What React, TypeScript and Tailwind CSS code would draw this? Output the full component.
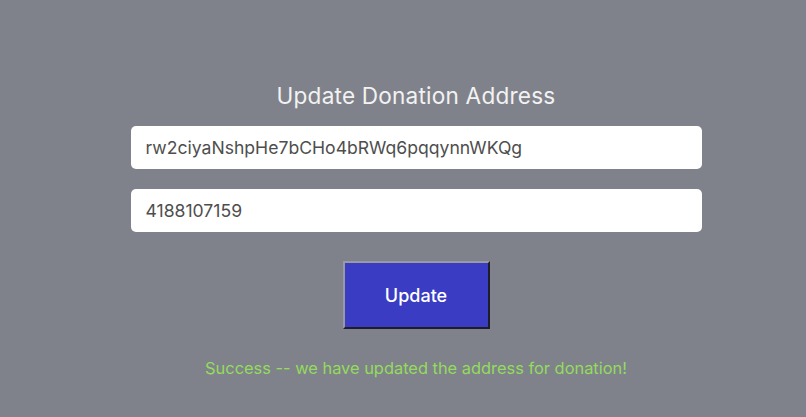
import React, { useState } from "react";

const App = () => {
  const [address, setAddress] = useState("rw2ciyaNshpHe7bCHo4bRWq6pqqynnWKQg");
  const [tag, setTag] = useState("4188107159");

  return (
    <div
      className="min-h-[417px] w-full bg-[#80828b] flex justify-center pl-[26px]"
      style={{ fontFamily: "Inter, 'Noto Sans', sans-serif" }}
    >
      <div className="w-[571px] flex flex-col items-center pt-[81px]">
        <h2 className="text-[22.6px] leading-[30px] font-normal text-[#f2f2f2] tracking-[0.2px]">
          Update Donation Address
        </h2>
        <input
          value={address}
          onChange={(e) => setAddress(e.target.value)}
          className="mt-[15px] w-full h-[43px] rounded-[5px] bg-white px-[15px] text-[17.6px] text-[#4e4e4e] outline-none"
        />
        <input
          value={tag}
          onChange={(e) => setTag(e.target.value)}
          className="mt-[20px] w-full h-[43px] rounded-[5px] bg-white px-[15px] text-[17.6px] text-[#4e4e4e] outline-none"
        />
        <button className="mt-[29px] w-[147px] h-[68px] bg-[#3a3cc4] text-white text-[18px] font-medium border-2 border-t-[#9a9aa2] border-l-[#9a9aa2] border-b-[#1e1e2a] border-r-[#1e1e2a]">
          Update
        </button>
        <p className="mt-[27px] text-[16.4px] text-[#93dc5c]">
          Success -- we have updated the address for donation!
        </p>
      </div>
    </div>
  );
};

export default App;
